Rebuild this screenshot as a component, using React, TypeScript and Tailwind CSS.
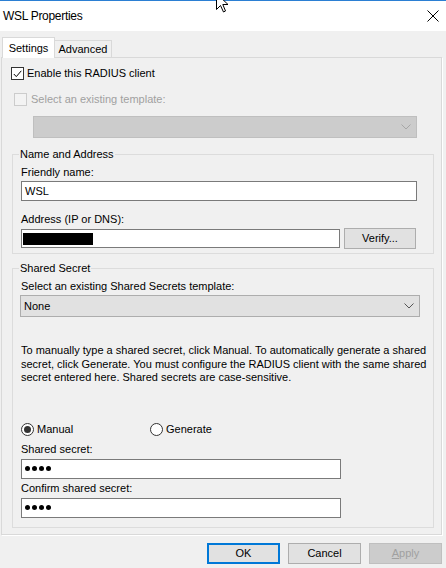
import * as React from "react"

// ==================== SMALL PIECES ====================

const Chevron: React.FC<{ color: string }> = ({ color }) => (
  <svg width="10" height="6" viewBox="0 0 10 6" fill="none">
    <path d="M0.5 0.5 L5 5 L9.5 0.5" stroke={color} strokeWidth="1" />
  </svg>
)

const Text: React.FC<{ children: React.ReactNode; className?: string }> = ({ children, className = "" }) => (
  <div className={`h-[13px] leading-[13px] whitespace-nowrap ${className}`}>{children}</div>
)

const Dots = () => (
  <div className="flex gap-[2px] items-center">
    {[0, 1, 2, 3].map((i) => (
      <span key={i} className="block w-[5px] h-[5px] rounded-full bg-black" />
    ))}
  </div>
)

const GroupBox: React.FC<{ title: string; className: string; children: React.ReactNode }> = ({
  title,
  className,
  children,
}) => (
  <div className={`relative border border-[#dcdcdc] ${className}`}>
    <span className="absolute left-[6px] -top-[7px] bg-[#f0f0f0] px-[1px] h-[13px] leading-[13px]">
      {title}
    </span>
    {children}
  </div>
)

// ==================== APP ====================

const App: React.FC = () => {
  return (
    <div
      className="relative w-[446px] h-[568px] overflow-hidden bg-[#f0f0f0] text-[11px] text-black"
      style={{ fontFamily: '"Liberation Sans", Arial, sans-serif' }}
    >
      {/* window frame top */}
      <div className="h-px bg-[#2b7fd3]" />

      {/* title bar */}
      <div className="h-[30px] bg-white flex items-center justify-between pl-[3px] pr-[6px]">
        <span className="text-[12px] tracking-[-0.3px]">WSL Properties</span>
        <svg width="12" height="12" viewBox="0 0 12 12" className="mr-[1px]">
          <path d="M0.5 0.5 L11.5 11.5 M11.5 0.5 L0.5 11.5" stroke="#000" strokeWidth="1" />
        </svg>
      </div>

      {/* tabs */}
      <div className="flex items-end pt-[6px] pl-[2px] h-[26px]">
        <div className="relative z-10 w-[53px] h-[21px] -mb-px bg-white border border-b-0 border-[#d9d9d9] flex items-center justify-center">
          Settings
        </div>
        <div className="w-[57px] h-[17px] border border-l-0 border-b-0 border-[#d9d9d9] bg-[#f0f0f0] flex items-center justify-center">
          Advanced
        </div>
      </div>

      {/* tab page */}
      <div className="ml-[1px] w-[441px] h-[478px] border border-[#d9d9d9] bg-[#f0f0f0] shadow-[1px_1px_0_#ffffff]">
        {/* enable checkbox */}
        <div className="mt-[9px] ml-[9px] flex items-center gap-[3px]">
          <div className="w-[13px] h-[13px] border border-[#333333] bg-white flex items-center justify-center">
            <svg width="9" height="8" viewBox="0 0 9 8" fill="none">
              <path d="M0.8 4 L3.3 6.6 L8.3 0.8" stroke="#000" strokeWidth="1" />
            </svg>
          </div>
          <Text>Enable this RADIUS client</Text>
        </div>

        {/* template checkbox (disabled) */}
        <div className="mt-[13px] ml-[12px] flex items-center gap-[4px] text-[#a0a0a0]">
          <div className="w-[13px] h-[13px] border border-[#cccccc] bg-[#f3f3f3]" />
          <Text>Select an existing template:</Text>
        </div>

        <div className="mt-[10px] ml-[31px] w-[384px] h-[22px] border border-[#bfbfbf] bg-[#cccccc] flex items-center justify-end pr-[5px]">
          <Chevron color="#a6a6a6" />
        </div>

        {/* Name and Address */}
        <GroupBox title="Name and Address" className="mt-[16px] ml-[10px] w-[422px] h-[100px]">
          <Text className="mt-[11px] ml-[8px]">Friendly name:</Text>
          <div className="mt-[2px] ml-[8px] w-[396px] h-[20px] border border-[#7a7a7a] bg-white flex items-center pl-[3px]">
            WSL
          </div>
          <Text className="mt-[12px] ml-[8px]">Address (IP or DNS):</Text>
          <div className="mt-[2px] ml-[8px] flex items-center gap-[4px] h-[21px]">
            <div className="w-[319px] h-[19px] border border-[#7a7a7a] bg-white flex items-center pl-[1px]">
              <div className="w-[70px] h-[12px] bg-black" />
            </div>
            <div className="w-[72px] h-[21px] border border-[#adadad] bg-[#e1e1e1] flex items-center justify-center">
              Verify...
            </div>
          </div>
        </GroupBox>

        {/* Shared Secret */}
        <GroupBox title="Shared Secret" className="mt-[14px] ml-[10px] w-[422px] h-[260px]">
          <Text className="mt-[11px] ml-[8px]">Select an existing Shared Secrets template:</Text>
          <div className="mt-[2px] ml-[7px] w-[400px] h-[22px] border border-[#adadad] bg-[#e1e1e1] flex items-center justify-between pl-[3px] pr-[5px]">
            <span>None</span>
            <Chevron color="#555555" />
          </div>

          <p className="mt-[27px] ml-[8px] leading-[13.5px]">
            To manually type a shared secret, click Manual. To automatically generate a shared
            <br />
            secret, click Generate. You must configure the RADIUS client with the same shared
            <br />
            secret entered here. Shared secrets are case-sensitive.
          </p>

          <div className="mt-[38px] ml-[8px] flex items-center h-[13px]">
            <div className="flex items-center gap-[3px] w-[129px]">
              <div className="w-[13px] h-[13px] rounded-full border border-[#333333] bg-white flex items-center justify-center">
                <div className="w-[7px] h-[7px] rounded-full bg-[#333333]" />
              </div>
              <span className="leading-[13px]">Manual</span>
            </div>
            <div className="flex items-center gap-[3px]">
              <div className="w-[13px] h-[13px] rounded-full border border-[#333333] bg-white" />
              <span className="leading-[13px]">Generate</span>
            </div>
          </div>

          <Text className="mt-[7px] ml-[8px]">Shared secret:</Text>
          <div className="mt-[3px] ml-[8px] w-[320px] h-[20px] border border-[#7a7a7a] bg-white flex items-center pl-[3px]">
            <Dots />
          </div>
          <Text className="mt-[3px] ml-[8px]">Confirm shared secret:</Text>
          <div className="mt-[3px] ml-[8px] w-[320px] h-[20px] border border-[#7a7a7a] bg-white flex items-center pl-[3px]">
            <Dots />
          </div>
        </GroupBox>
      </div>

      {/* dialog buttons */}
      <div className="mt-[8px] flex justify-end gap-[8px] pr-[4px]">
        <div className="w-[73px] h-[21px] border-2 border-[#0078d7] bg-[#e1e1e1] flex items-center justify-center">
          OK
        </div>
        <div className="w-[73px] h-[21px] border border-[#adadad] bg-[#e1e1e1] flex items-center justify-center">
          Cancel
        </div>
        <div className="w-[73px] h-[21px] border border-[#bfbfbf] bg-[#cccccc] text-[#a0a0a0] flex items-center justify-center">
          <span>
            <span className="underline">A</span>pply
          </span>
        </div>
      </div>

      {/* mouse pointer over the title bar */}
      <svg
        className="absolute left-[216px] -top-[7px]"
        width="13"
        height="20"
        viewBox="0 0 13 20"
      >
        <path
          d="M0.5 0.5 L0.5 16.5 L4.5 12.5 L7.5 19 L9.5 18 L6.8 11.5 L12 11.5 Z"
          fill="#fff"
          stroke="#000"
          strokeWidth="1"
          strokeLinejoin="miter"
        />
      </svg>
    </div>
  )
}

export default App
